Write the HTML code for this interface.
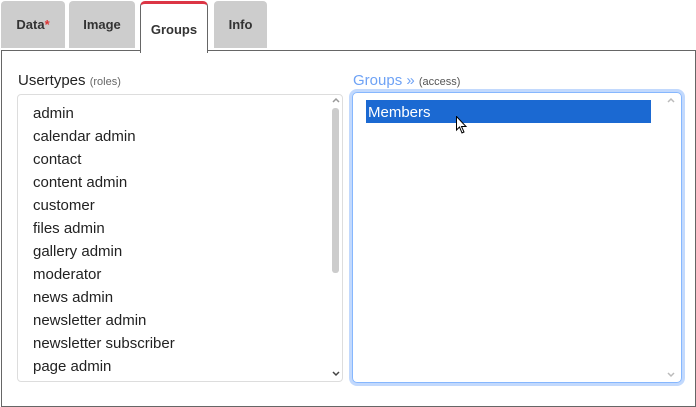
<!DOCTYPE html>
<html><head><style>
body{margin:0;width:696px;height:407px;background:#fff;font-family:"Liberation Sans",sans-serif;position:relative;overflow:hidden}
.tab{position:absolute;top:1px;height:47px;background:#cdcdcd;border-radius:4px 4px 0 0;font-size:13px;font-weight:bold;color:#333;text-align:center;line-height:48px}
.panel{position:absolute;left:1px;top:50px;width:693px;height:355px;border:1px solid #666}
.item{position:absolute;left:33px;font-size:15px;color:#222}
svg{position:absolute}
</style></head><body>
<div class="panel"></div>
<div class="tab" style="left:1px;width:64px">Data<span style="color:#d33">*</span></div>
<div class="tab" style="left:69px;width:66px">Image</div>
<div class="tab" style="left:214px;width:53px">Info</div>
<div style="position:absolute;left:140px;top:1px;width:68px;background:#fff;border:1px solid #666;border-bottom:none;border-top:3px solid #dc3545;border-radius:5px 5px 0 0;font-size:13px;font-weight:bold;color:#333;text-align:center;line-height:52px;box-sizing:border-box;height:52px">Groups</div>
<div style="position:absolute;left:18px;top:72px;font-size:15px;color:#222">Usertypes <span style="font-size:11px;color:#666">(roles)</span></div>
<div style="position:absolute;left:17px;top:94px;width:326px;height:288px;border:1px solid #ddd;border-radius:4px;box-sizing:border-box"></div>
<div style="position:absolute;left:332px;top:108px;width:7px;height:165px;background:#ccc;border-radius:3px"></div>
<svg style="left:332px;top:97px" width="8" height="6"><path d="M1 5 L4 2 L7 5" fill="none" stroke="#999" stroke-width="1.5"/></svg>
<svg style="left:332px;top:371px" width="8" height="6"><path d="M1 1 L4 4 L7 1" fill="none" stroke="#444" stroke-width="1.5"/></svg>
<div class="item" style="top:105px">admin</div>
<div class="item" style="top:128px">calendar admin</div>
<div class="item" style="top:151px">contact</div>
<div class="item" style="top:174px">content admin</div>
<div class="item" style="top:197px">customer</div>
<div class="item" style="top:220px">files admin</div>
<div class="item" style="top:243px">gallery admin</div>
<div class="item" style="top:266px">moderator</div>
<div class="item" style="top:289px">news admin</div>
<div class="item" style="top:312px">newsletter admin</div>
<div class="item" style="top:335px">newsletter subscriber</div>
<div class="item" style="top:358px">page admin</div>
<div style="position:absolute;left:353px;top:72px;font-size:15px;color:#6ea2f5">Groups » <span style="font-size:11px;color:#555">(access)</span></div>
<div style="position:absolute;left:352px;top:92px;width:330px;height:291px;border:1px solid #86b7fe;box-shadow:0 0 0 3px #c2d9fd;border-radius:5px;box-sizing:border-box"></div>
<div style="position:absolute;left:366px;top:100px;width:285px;height:23px;background:#1b69d2;color:#fff;font-size:15px;line-height:25px;padding-left:2px;box-sizing:border-box">Members</div>
<svg style="left:456px;top:116px" width="12" height="19" viewBox="0 0 12 19"><path d="M0.5 0.5 L0.5 14 L3.5 11 L6 17 L8 16 L5.5 10.5 L10 10.5 Z" fill="#fff" stroke="#000" stroke-width="1"/></svg>
<svg style="left:667px;top:97px" width="8" height="6"><path d="M1 5 L4 2 L7 5" fill="none" stroke="#bbb" stroke-width="1.5"/></svg>
<svg style="left:667px;top:372px" width="8" height="6"><path d="M1 1 L4 4 L7 1" fill="none" stroke="#bbb" stroke-width="1.5"/></svg>
</body></html>
